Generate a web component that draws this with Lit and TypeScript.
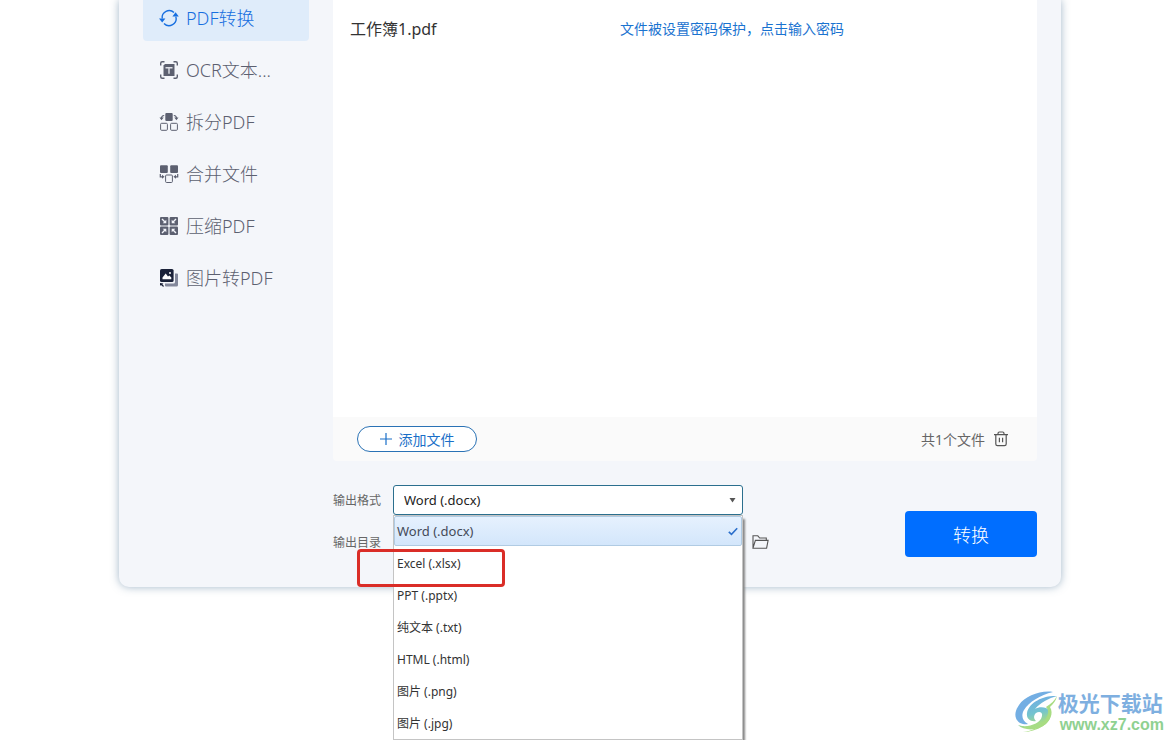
import { LitElement, html, svg, css, nothing } from "lit";
import { customElement, state } from "lit/decorators.js";

const icons = {
  convert: svg`<g fill="none" stroke="currentColor" stroke-width="1.4"><path d="M3.2 10.5A7 7 0 0 1 15 4.6"/><path d="M16.8 8.6A7 7 0 0 1 5 15.4"/></g><path fill="currentColor" d="M0 10.5h6.4L3.2 14.4zM13.4 8.4h6.4L16.6 4.2z"/>`,
  ocr: svg`<path fill="none" stroke="currentColor" stroke-width="1.4" d="M1.7 5.5V3.2a1.5 1.5 0 0 1 1.5-1.5h2.3M14.5 1.7h2.3a1.5 1.5 0 0 1 1.5 1.5v2.3M18.3 14.5v2.3a1.5 1.5 0 0 1-1.5 1.5h-2.3M5.5 18.3H3.2a1.5 1.5 0 0 1-1.5-1.5v-2.3"/><path fill="currentColor" d="M6 4h9.500v12H4.500V5.500z"/><path fill="none" stroke="#dfe1e8" stroke-width="1.4" d="M6.500 7.700h7M10 7.700v6"/>`,
  split: svg`<rect x="6.300" y="1" width="7.400" height="8" rx="1" fill="currentColor"/><g fill="none" stroke="currentColor"><rect x="1.600" y="11.300" width="6.800" height="7" rx="1"/><rect x="11.600" y="11.300" width="6.800" height="7" rx="1"/><path stroke-width="1.100" d="M5.200 3.500C3 3.600 2.400 4.600 2.400 7M14.800 3.500c2.200.1 2.800 1.100 2.800 3.500"/></g><path fill="currentColor" d="M.5 5.500h4.200L2.500 8.300zM15.300 5.500h4.200l-2.100 2.800z"/>`,
  merge: svg`<g fill="currentColor"><rect x="1" y="1.200" width="7.800" height="7.800" rx="1"/><rect x="11.200" y="1.200" width="7.800" height="7.800" rx="1"/><path d="M3 10.700v4l2.600-2zM17 10.700v4l-2.600-2z"/></g><g fill="none" stroke="currentColor"><rect x="6.600" y="11" width="6.800" height="7.500" rx="1"/><path stroke-width="1.200" d="M1.300 10v2.800h2.500M18.700 10v2.800h-2.500"/></g>`,
  compress: svg`<g fill="currentColor"><rect x="1" y="1" width="8.400" height="8.400" rx="1"/><rect x="10.600" y="1" width="8.400" height="8.400" rx="1"/><rect x="1" y="10.600" width="8.400" height="8.400" rx="1"/><rect x="10.600" y="10.600" width="8.400" height="8.400" rx="1"/></g><path stroke="#f3f5fa" stroke-width="1.400" d="M3 3l3 3M17 3l-3 3M3 17l3-3M17 17l-3-3"/><path fill="#f3f5fa" d="M7.300 3.700v3.600H3.700zM12.700 3.700v3.600h3.600zM7.300 16.300v-3.600H3.700zM12.700 16.300v-3.600h3.600z"/>`,
  image: svg`<path fill="#83889b" d="M16 5.500h2a1 1 0 0 1 1 1V17a1.500 1.500 0 0 1-1.500 1.500H7a1 1 0 0 1-1-1V15.500h8.500a1.500 1.500 0 0 0 1.500-1.500z"/><rect x="1" y="1" width="13.600" height="13" rx="1.600" fill="#1b2239"/><path fill="#fff" d="M3.500 11.200V9.500L6.700 5.600 9 8.400l1.300-1 2 2v1.800z"/><circle cx="11" cy="4.900" r="1" fill="#fff"/><path fill="#1b2239" d="M1 15l3.400.4-1 1 1.400 1.300v1c-1.400 0-1.800-.6-2.400-1.400L1 17.500z"/>`,
};

const tools = [
  { name: "PDF转换", icon: icons.convert },
  { name: "OCR文本...", icon: icons.ocr },
  { name: "拆分PDF", icon: icons.split },
  { name: "合并文件", icon: icons.merge },
  { name: "压缩PDF", icon: icons.compress },
  { name: "图片转PDF", icon: icons.image },
];

const formats = ["Word (.docx)", "Excel (.xlsx)", "PPT (.pptx)", "纯文本 (.txt)", "HTML (.html)", "图片 (.png)", "图片 (.jpg)"];

@customElement("app-root")
export class AppRoot extends LitElement {
  @state() private tool = 0;
  @state() private format = 0;
  @state() private directory = "";

  static styles = css`
    :host {
      display: block;
      position: relative;
      min-height: 100vh;
      overflow: hidden;
      background: #fff;
      font-family: "Noto Sans", "Noto Sans CJK SC", sans-serif;
      font-size: 13px;
      color: #333;
    }
    * { box-sizing: border-box; }
    button, input, select { font: inherit; color: inherit; margin: 0; }
    button { border: 0; background: none; padding: 0; cursor: pointer; }
    .window {
      display: grid;
      grid-template-columns: 166px minmax(0, 1fr);
      gap: 24px;
      margin: 0 113px 0 119px;
      padding: 0 24px 30px;
      background: #f4f6fa;
      border-radius: 0 0 10px 10px;
      box-shadow: 0 0 8px rgba(70, 110, 145, 0.5);
    }
    .tools { display: flex; flex-direction: column; gap: 6px; margin-top: -5px; }
    .tool {
      display: flex;
      align-items: center;
      gap: 7px;
      height: 46px;
      padding: 0 16px;
      border-radius: 4px;
      font-size: 18px;
      font-weight: 300;
      line-height: 24px;
      color: #5c6070;
      white-space: nowrap;
    }
    .tool.active { background: #dfecfa; color: #176fe0; }
    .tool svg { width: 20px; height: 20px; flex: none; }
    .list { height: 417px; background: #fff; }
    .file { display: flex; align-items: center; height: 56px; padding-left: 17px; }
    .name { width: 270px; font-size: 16px; color: #333; }
    a { font-size: 14px; color: #1a73d0; text-decoration: none; }
    .bar {
      display: flex;
      align-items: center;
      justify-content: space-between;
      height: 44px;
      padding: 0 28px 0 24px;
      background: #fafafa;
      border-radius: 0 0 4px 4px;
      font-size: 14px;
      color: #666;
    }
    .add {
      display: flex;
      align-items: center;
      justify-content: center;
      gap: 7px;
      width: 120px;
      height: 26px;
      border: 1px solid #2a72b5;
      border-radius: 13px;
      background: #fff;
      color: #1a6fc8;
    }
    .add svg { width: 12px; height: 12px; }
    .count { display: flex; align-items: center; gap: 8px; }
    .count button, .browse { display: flex; color: #555; }
    .output { display: flex; justify-content: space-between; align-items: flex-end; padding-top: 24px; }
    .fields { display: grid; grid-template-columns: 60px 350px auto; row-gap: 12px; align-items: center; }
    label { font-size: 12px; color: #666; }
    .combo { position: relative; grid-column: 2 / 4; width: 350px; }
    select, .path {
      display: block;
      width: 100%;
      height: 30px;
      padding: 0 10px;
      border: 1px solid #2b6f8e;
      border-radius: 3px;
      background: #fff;
      appearance: none;
      outline: none;
      color: #222;
    }
    .path { border-color: #ccc; }
    .arrow { position: absolute; right: 7px; top: 12px; width: 7px; height: 6px; pointer-events: none; }
    .menu {
      position: absolute;
      z-index: 2;
      top: 30px;
      left: 0;
      width: 100%;
      border: 1px solid #c4c4c4;
      background: #fff;
      box-shadow: 3px 3px 2px -1px #888;
    }
    .option {
      display: flex;
      align-items: center;
      justify-content: space-between;
      width: 100%;
      height: 32px;
      padding: 0 3px;
      font-size: 12px;
      text-align: left;
    }
    .option.active {
      height: 30px;
      margin-bottom: 1px;
      border: 1px solid #b0cbe3;
      border-radius: 2px;
      padding: 0 3px 0 2px;
      background: linear-gradient(#e6f1fe, #d3e6fb);
      font-size: 13px;
      color: #444a58;
    }
    .option svg { width: 10px; height: 9px; }
    .mark {
      position: absolute;
      z-index: 3;
      top: 64px;
      left: -36px;
      width: 148px;
      height: 38px;
      border: 3px solid #da2d27;
      border-radius: 4px;
      pointer-events: none;
    }
    .browse { margin-left: 9px; }
    .submit {
      width: 132px;
      height: 46px;
      border-radius: 4px;
      background: #006eff;
      color: #fff;
      font-size: 18px;
      font-weight: 300;
    }
    .brand { position: absolute; right: 10px; bottom: 6px; display: flex; align-items: center; }
    .brand svg { width: 43px; height: 44px; }
    .site { font-size: 21px; line-height: 26px; font-weight: 700; color: #7eafe0; }
    .url { padding-left: 2px; font: 700 16px/18px "Liberation Sans", sans-serif; color: #8fd191; }
  `;

  render() {
    return html`
      <div class="window">
        <nav class="tools">
          ${tools.map(
            (t, i) => html`<button class="tool ${i === this.tool ? "active" : ""}" @click=${() => (this.tool = i)}>
              <svg viewBox="0 0 20 20" aria-hidden="true">${t.icon}</svg><span>${t.name}</span>
            </button>`
          )}
        </nav>
        <main>
          <div class="list">
            <div class="file"><span class="name">工作簿1.pdf</span><a href="#">文件被设置密码保护，点击输入密码</a></div>
          </div>
          <div class="bar">
            <button class="add">
              <svg viewBox="0 0 12 12" aria-hidden="true"><path d="M6 0v12M0 6h12" stroke="currentColor" stroke-width="1.2" /></svg>添加文件
            </button>
            <div class="count">
              <span>共1个文件</span>
              <button aria-label="清空">
                <svg width="16" height="16" viewBox="0 0 16 16" fill="none" stroke="currentColor" stroke-width="1.2">
                  <path d="M1 3.600h14M5 3.600V2.400C5 1.500 5.600 1 6.400 1h3.200c.8 0 1.400.5 1.400 1.400v1.200M2.800 3.600v9.400c0 1 .7 1.700 1.700 1.700h7c1 0 1.700-.7 1.700-1.700V3.600M6.400 6.700v4.500M9.600 6.700v4.500" />
                </svg>
              </button>
            </div>
          </div>
          <div class="output">
            <div class="fields">
              <label for="format">输出格式</label>
              <div class="combo">
                <select id="format" .selectedIndex=${this.format} @change=${(e: Event) => (this.format = (e.target as HTMLSelectElement).selectedIndex)}>
                  ${formats.map((f) => html`<option>${f}</option>`)}
                </select>
                <svg class="arrow" viewBox="0 0 7 6" aria-hidden="true"><path d="M.5 1h6L3.500 5.500z" fill="#555" /></svg>
                <div class="menu">
                  ${formats.map(
                    (f, i) => html`<button class="option ${i === this.format ? "active" : ""}" @click=${() => (this.format = i)}>
                      ${f}${i === this.format
                        ? html`<svg viewBox="0 0 10 9" aria-hidden="true"><path d="M.8 4.800l2.700 2.600L9.200 1.300" fill="none" stroke="#2b6fcb" stroke-width="1.6" /></svg>`
                        : nothing}
                    </button>`
                  )}
                </div>
                <div class="mark"></div>
              </div>
              <label for="directory">输出目录</label>
              <input class="path" id="directory" .value=${this.directory} />
              <button class="browse" aria-label="浏览">
                <svg width="17" height="16" viewBox="0 0 17 16" fill="none" stroke="currentColor" stroke-width="1.1">
                  <path d="M1 14.200V1.800h4.800L7.700 4h6.600v2.300M1 14.200L3.400 6.400h12.700l-1.500 7.800z" />
                </svg>
              </button>
            </div>
            <button class="submit">转换</button>
          </div>
        </main>
      </div>
      <div class="brand">
        <svg viewBox="0 0 43 44" aria-hidden="true">
          <defs>
            <linearGradient id="swirl" x1="0" y1="0" x2="0.35" y2="1">
              <stop offset="0.2" stop-color="#6faee2" /><stop offset="0.6" stop-color="#74c4cf" /><stop offset="0.9" stop-color="#a6dc84" />
            </linearGradient>
          </defs>
          <path fill="#73aee3" d="M38 2C26 0 10 6 4 15-1 22-1 29 5 33c4 2 8 1 8 1-6-3-7-9-4-14C14 12 25 5 38 2z" />
          <path fill="url(#swirl)" d="M42 6c-11-1-28 5-30 17-1 6 4 9 9 8-2-2-3-5 0-8 3-2 7-1 6 3-1 7-12 11-20 10l-4-1c6 6 20 6 28-1 6-6 6-13 0-16-3-1-8-1-11 1 5-6 14-11 22-13z" />
          <path fill="#a8dc82" d="M42 6c-1 5-4 8-7 11 4 7 0 14-7 19-6 4-14 6-20 6 9-1 18-5 22-12 4-6 4-10 1-13 5-3 9-7 11-11z" />
        </svg>
        <div><div class="site">极光下载站</div><div class="url">www.xz7.com</div></div>
      </div>
    `;
  }
}
